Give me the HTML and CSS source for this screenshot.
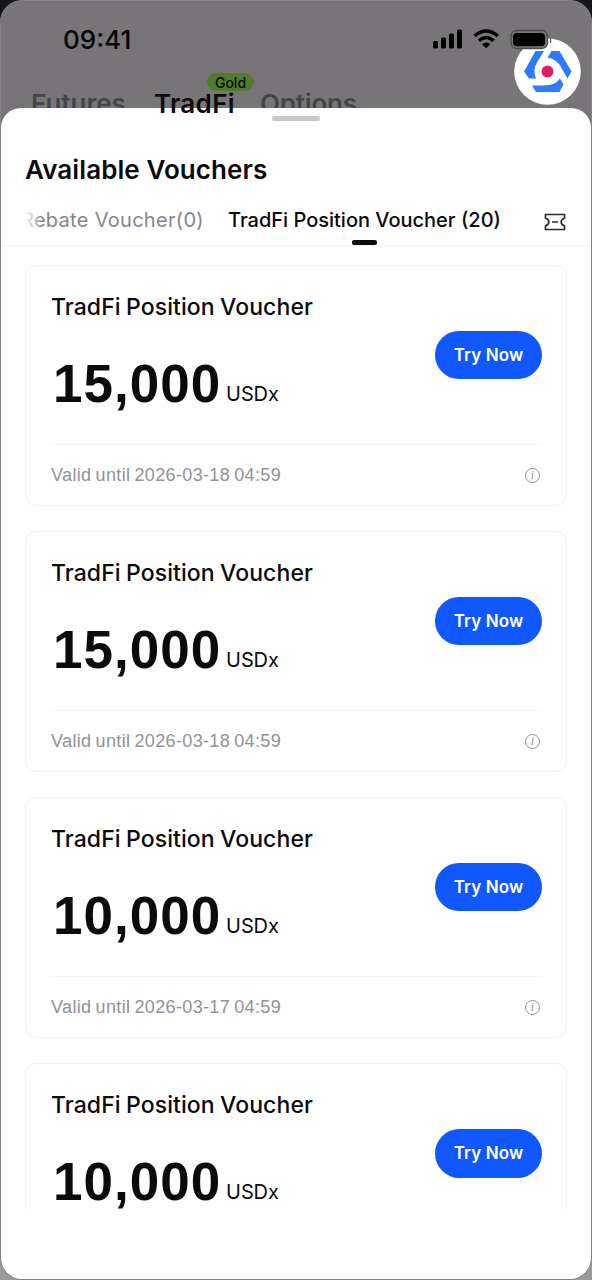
FILE: index.html
```html
<!DOCTYPE html>
<html lang="en">
<head>
<meta charset="utf-8">
<title>Available Vouchers</title>
<link rel="stylesheet" href="styles.css">
</head>
<body>
<div class="phone">
  <header class="backdrop">
    <div class="status">
      <span class="time">09:41</span>
      <svg class="status-icons" width="122" height="24" viewBox="0 0 122 24">
        <rect x="0" y="14" width="5" height="7.500" rx="1.500"/><rect x="8" y="10.500" width="5" height="11" rx="1.500"/><rect x="16" y="6.500" width="5" height="15" rx="1.500"/><rect x="24" y="2.500" width="5" height="19" rx="1.500"/>
        <g fill="none" stroke="#000" stroke-width="3.400"><path d="M41.600 9q11.600-10 23.200 0"/><path d="M45.800 13.600q7.400-6.200 14.800 0"/></g>
        <path d="M49 17.200q4.200-3.300 8.400 0L53.200 21.300Z"/>
      </svg>
    </div>
    <nav class="nav">
      <span class="nav-futures">Futures</span>
      <span class="nav-active"><span class="nav-tradfi">TradFi</span><span class="gold">Gold</span></span>
      <span class="nav-options">Options</span>
    </nav>
    <svg class="logo" width="84" height="80" viewBox="508 26 84 80">
      <circle cx="547.500" cy="71.500" r="33.300" fill="#fff"/>
      <path fill="#2d7bfb" d="M535.500 51H544L537 62.500Q532.300 70 536 78.500H529L524 71.500ZM551.500 51H559.500L571.500 71.500L567.500 78.500L562 69Q557.500 59 547.500 57.500ZM532 85.500H544Q555 85.500 560 78.500L563.500 84.500L559.500 92H536Z"/>
      <circle cx="547.500" cy="71.500" r="5.900" fill="#df1e5d"/>
      <path d="M550.500 38v5" stroke="#555" stroke-width="1.300"/>
      <rect x="511" y="30.500" width="36.500" height="18" rx="5.500" fill="#777577" stroke="#4b494b" stroke-width="1.300"/>
      <rect x="513" y="33" width="32" height="13.200" rx="3.800"/>
    </svg>
  </header>
  <main class="sheet">
    <div class="handle"></div>
    <h1 class="title">Available Vouchers</h1>
    <div class="tabs">
      <div class="scroller"><span class="rebate">Rebate Voucher(0)</span><span class="current">TradFi Position Voucher (20)</span></div>
      <svg class="ticket" width="22" height="18" viewBox="0 0 22 18" fill="none" stroke="#2b2c30" stroke-width="1.700"><path d="M1.500 1.500h19v3.700c-4.400 1.200-4.400 6.400 0 7.600v3.700h-19v-3.700c4.400-1.200 4.400-6.400 0-7.600ZM8 9h6"/></svg>
    </div>
    <div class="list">
      <article class="card"><h2 class="name">TradFi Position Voucher</h2><button class="try">Try Now</button><p class="amount"><b class="value">15,000</b><span class="unit">USDx</span></p><footer class="foot"><span class="valid">Valid until 2026-03-18 04:59</span><span class="info">i</span></footer></article>
      <article class="card"><h2 class="name">TradFi Position Voucher</h2><button class="try">Try Now</button><p class="amount"><b class="value">15,000</b><span class="unit">USDx</span></p><footer class="foot"><span class="valid">Valid until 2026-03-18 04:59</span><span class="info">i</span></footer></article>
      <article class="card"><h2 class="name">TradFi Position Voucher</h2><button class="try">Try Now</button><p class="amount"><b class="value">10,000</b><span class="unit">USDx</span></p><footer class="foot"><span class="valid">Valid until 2026-03-17 04:59</span><span class="info">i</span></footer></article>
      <article class="card"><h2 class="name">TradFi Position Voucher</h2><button class="try">Try Now</button><p class="amount"><b class="value">10,000</b><span class="unit">USDx</span></p></article>
    </div>
  </main>
</div>
</body>
</html>
```
FILE: styles.css
```css
* { box-sizing: border-box; margin: 0; padding: 0; }
body { width: 592px; height: 1280px; overflow: hidden; background: linear-gradient(#171618 0 640px, #9a9a9a 640px); font-family: Inter, sans-serif; color: #0b0b0d; white-space: nowrap; }
.phone { position: relative; width: 592px; height: 1280px; border: 1px solid #858385; border-radius: 22px; overflow: hidden; background: #777577; display: flex; flex-direction: column; }
.backdrop { height: 107px; flex: none; }
.status { display: flex; justify-content: space-between; align-items: center; height: 76px; padding: 0 36px 0 62px; }
.time { font-size: 26px; font-weight: 500; line-height: 30px; padding-top: 2px; color: #050505; }
.status-icons { margin-left: auto; }
.nav { display: flex; padding-left: 30px; margin-top: 12px; font-size: 26px; line-height: 30px; font-weight: 600; color: #454449; }
.nav-futures { width: 123px; }
.nav-active { position: relative; width: 106px; color: #0b0b0d; letter-spacing: 0.300px; }
.nav-options { letter-spacing: -0.200px; }
.gold { position: absolute; left: 53px; top: -16px; width: 47px; height: 18px; border-radius: 9px; background: #4e7d2c; font-size: 14px; line-height: 19px; font-weight: 500; letter-spacing: 0; text-align: center; }
.logo { position: absolute; left: 507px; top: 25px; }
.sheet { flex: 1; min-height: 0; background: #fefefe; border-radius: 20px 20px 0 0; display: flex; flex-direction: column; }
.handle { width: 48px; height: 5px; border-radius: 3px; background: #c6c8ca; margin: 8px auto 0; flex: none; }
.title { font-size: 26px; line-height: 32px; font-weight: 600; letter-spacing: 0.080px; margin: 33px 0 0 24px; }
.tabs { display: flex; align-items: center; justify-content: space-between; height: 60px; padding: 0 25px 0 24px; border-bottom: 1px solid #f4f4f5; }
.scroller { position: relative; width: 500px; height: 59px; display: flex; align-items: center; font-size: 20px; line-height: 28px; padding-top: 9px; }
.scroller::before { content: ""; position: absolute; z-index: 1; left: -4px; top: 20px; width: 21px; height: 30px; background: linear-gradient(90deg, #fefefe 20%, #fefefe00); }
.rebate { color: #85868b; margin-left: -4px; width: 207px; letter-spacing: 0.300px; }
.current { font-weight: 500; position: relative; }
.current::after { content: ""; position: absolute; left: 124px; top: 34px; width: 25px; height: 5px; border-radius: 2px; background: #0b0b0d; }
.ticket { margin-top: 13px; }
.list { height: 964px; overflow: hidden; padding: 18.500px 24px 0; display: flex; flex-direction: column; gap: 25px; }
.card { flex: none; height: 241.200px; border: 1px solid #f2f2f4; border-radius: 11px; padding: 25px 24px 0 25px; display: grid; grid-template-columns: 1fr 107px; grid-template-rows: 32px 121px 62px; }
.name { font-size: 23px; line-height: 32px; font-weight: 500; letter-spacing: 0.100px; word-spacing: -1px; }
.try { grid-column: 2; grid-row: 1 / 3; margin-top: 40px; width: 107px; height: 48.500px; border: 0; border-radius: 25px; background: #1157ff; color: #fff; font: 600 17px/48px Inter, sans-serif; letter-spacing: 0.100px; }
.amount { grid-row: 2; grid-column: 1; display: flex; align-items: flex-start; padding-top: 30px; }
.value { font: 700 53px/62px "Liberation Sans", sans-serif; letter-spacing: 1px; margin-left: 2px; }
.unit { font-size: 20px; line-height: 30px; margin: 26px 0 0 5px; letter-spacing: -0.100px; }
.foot { grid-column: 1 / 3; border-top: 1px solid #f6f6f7; display: flex; align-items: center; justify-content: space-between; }
.valid { font: 18px/24px "Liberation Sans", sans-serif; color: #929298; letter-spacing: 0.350px; word-spacing: -1.200px; }
.info { width: 15px; height: 15px; border: 1.300px solid #929298; border-radius: 50%; margin: 1px 2px 0 0; font: italic 12px/12px "Liberation Serif", serif; color: #929298; text-align: center; }
```
